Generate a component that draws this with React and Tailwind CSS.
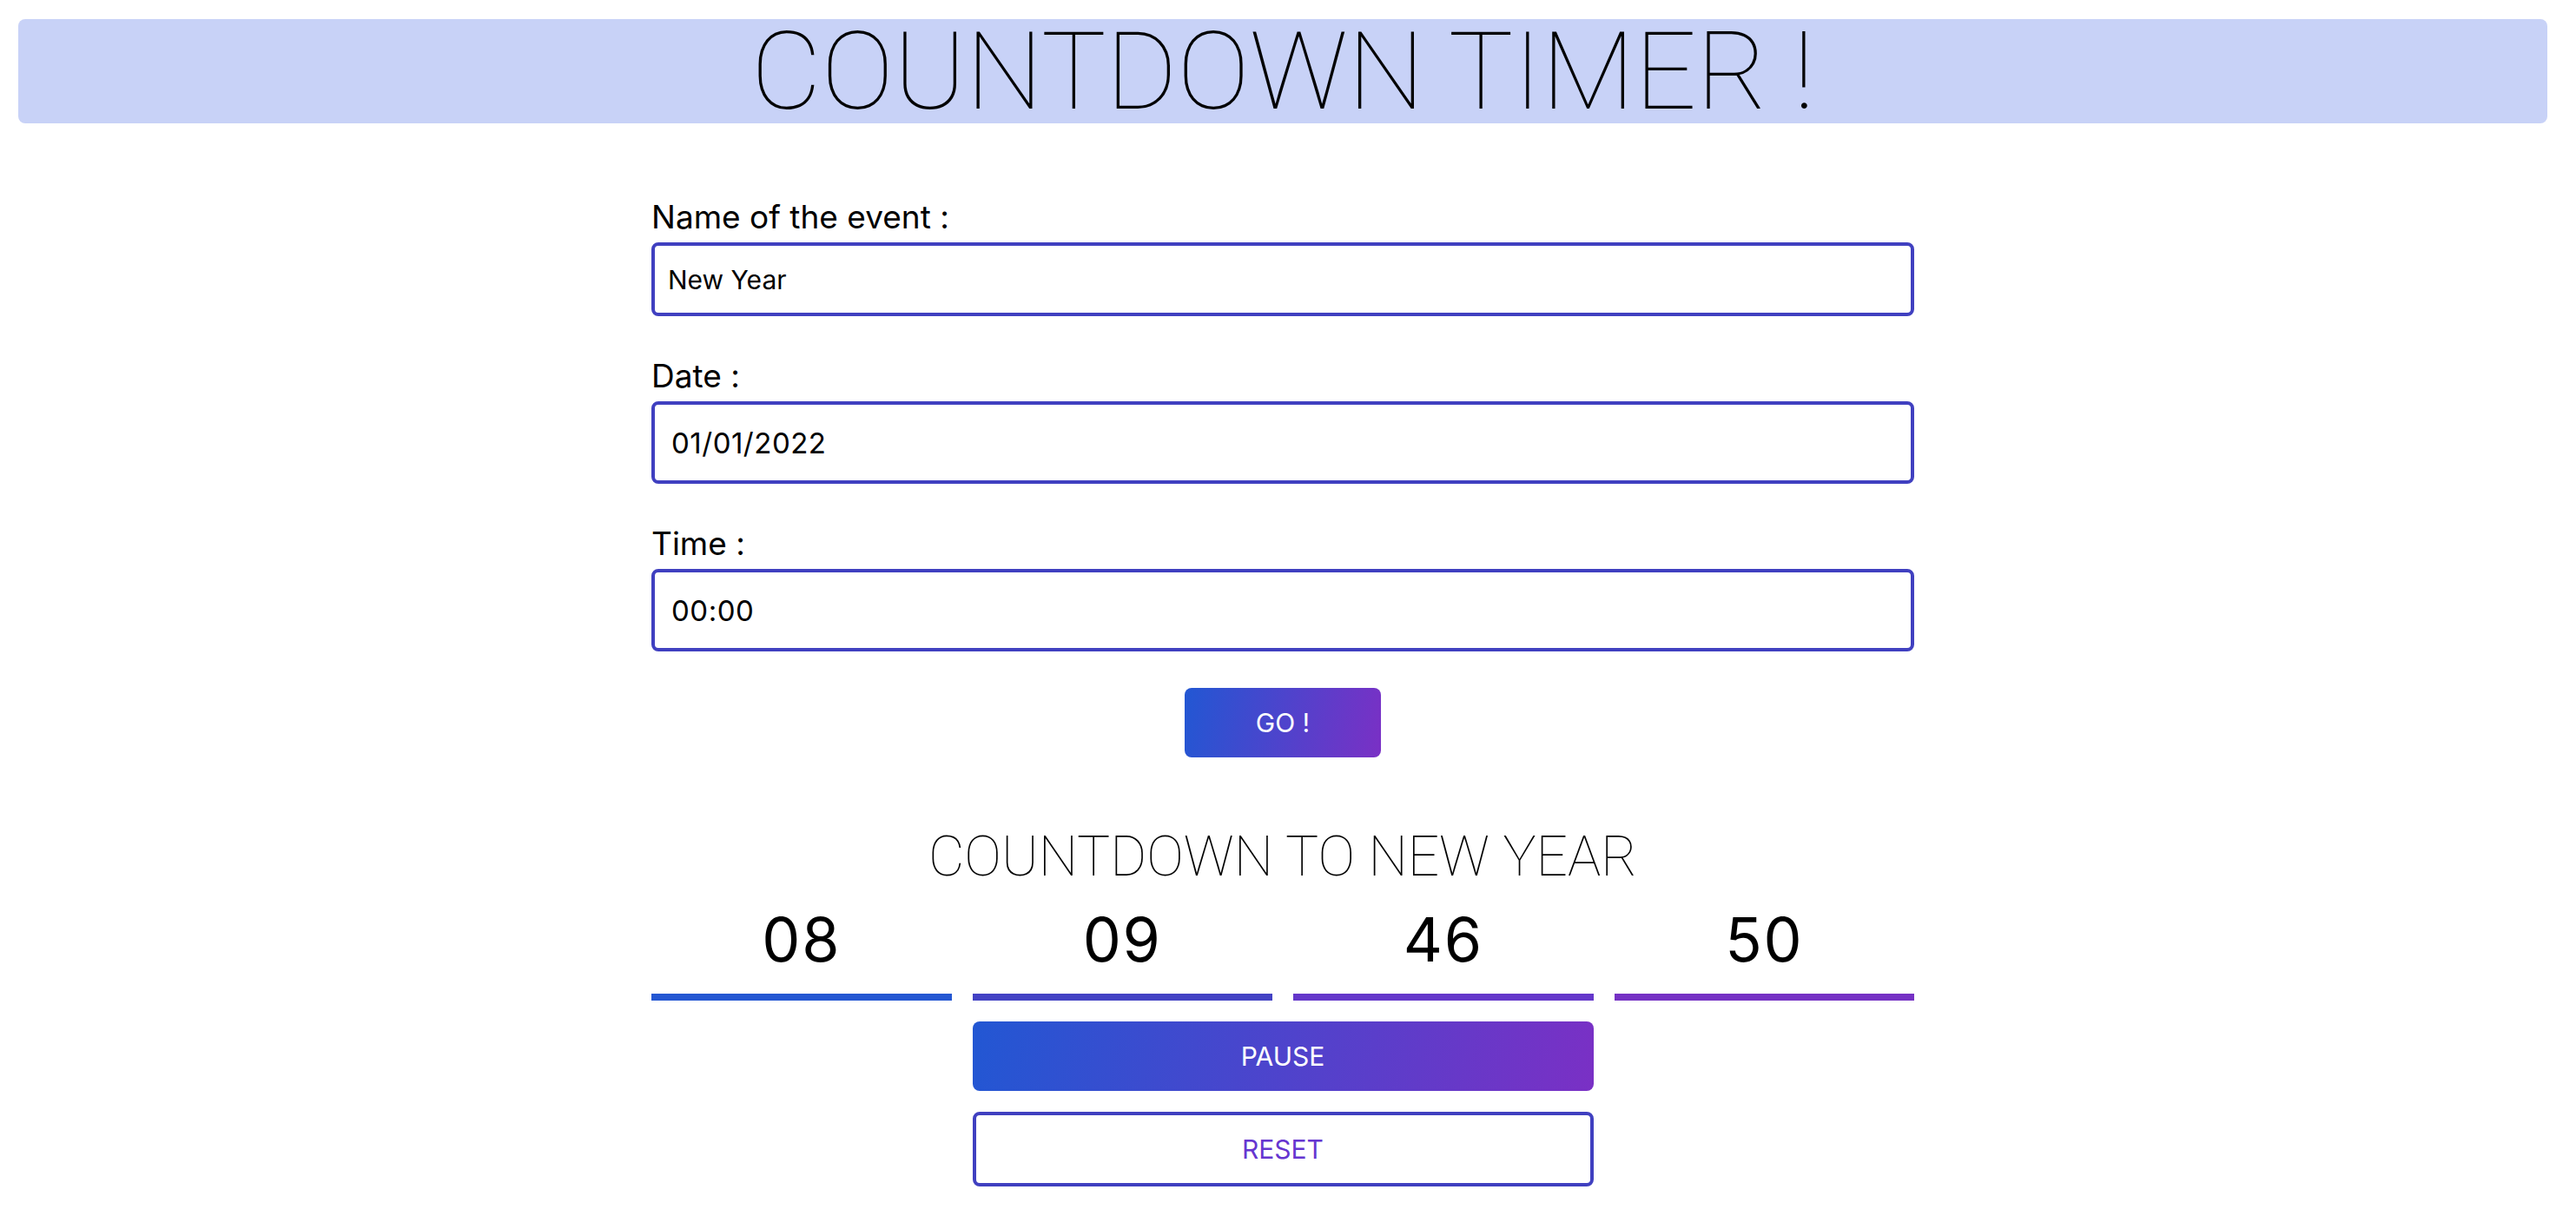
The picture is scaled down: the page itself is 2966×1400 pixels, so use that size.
import React from 'react';

const sans = { fontFamily: 'Inter, "Liberation Sans", sans-serif' };

const Field = ({ label, value, height, textSize, first }) => (
  <div className={first ? '' : 'mt-[48px]'}>
    <label className="block text-[37px] leading-[42px] text-black">{label}</label>
    <input
      readOnly
      value={value}
      className={`mt-[8px] block w-full ${height} rounded-lg border-[4px] border-[#4040c0] bg-white px-[15px] ${textSize} text-black outline-none`}
    />
  </div>
);

export default function App() {
  const parts = [
    { value: '08', color: 'bg-[#2457d2]' },
    { value: '09', color: 'bg-[#4342c4]' },
    { value: '46', color: 'bg-[#6437ca]' },
    { value: '50', color: 'bg-[#7531c4]' },
  ];

  return (
    <div className="min-h-screen w-[2954px] bg-white pb-10" style={sans}>
      {/* header */}
      <div className="mx-[21px] mt-[22px] flex h-[120px] items-center justify-center rounded-lg bg-[#c8d2f7]">
        <h1 className="text-[125px] leading-none font-thin text-black font-['Roboto',sans-serif]">
          COUNTDOWN TIMER !
        </h1>
      </div>

      {/* form */}
      <div className="mx-auto mt-[87px] w-[1454px]">
        <Field first label="Name of the event :" value="New Year" height="h-[85px]" textSize="text-[30px]" />
        <Field label="Date :" value="01/01/2022" height="h-[95px]" textSize="text-[33px] pl-[19px] tracking-[0.5px]" />
        <Field label="Time :" value="00:00" height="h-[95px]" textSize="text-[33px] pl-[19px] tracking-[0.5px]" />

        <div className="mt-[42px] flex justify-center">
          <button className="h-[80px] w-[226px] rounded-lg bg-[linear-gradient(100deg,#2257d3,#7a30c5)] text-[30px] text-white">
            GO !
          </button>
        </div>

        {/* countdown */}
        <h2 className="mt-[83px] text-center text-[64px] leading-none font-thin text-black font-['Roboto',sans-serif]">
          COUNTDOWN TO NEW YEAR
        </h2>

        <div className="mt-[28px] grid grid-cols-4 gap-x-[24px]">
          {parts.map((p, i) => (
            <div key={i} className="flex flex-col items-center">
              <span className="text-[70px] leading-none text-black tracking-wide">{p.value}</span>
              <div className={`mt-[27px] h-[8px] w-full ${p.color}`} />
            </div>
          ))}
          <button className="col-span-2 col-start-2 mt-[24px] h-[80px] rounded-lg bg-[linear-gradient(100deg,#2257d3,#7a30c5)] text-[30px] text-white">
            PAUSE
          </button>
          <button className="col-span-2 col-start-2 mt-[24px] h-[86px] rounded-lg border-[4px] border-[#4040c0] bg-white text-[30px] text-[#6636d0]">
            RESET
          </button>
        </div>
      </div>
    </div>
  );
}
